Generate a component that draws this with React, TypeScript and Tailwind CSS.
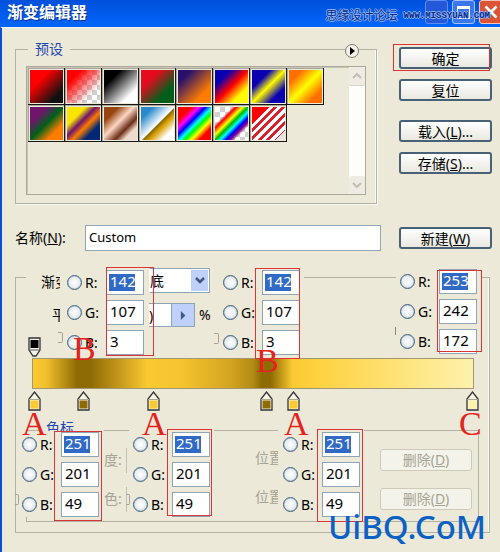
import type { ReactNode } from "react";

const presets = [
  "[background:linear-gradient(135deg,#ff0000_30%,#111_80%)]",
  "[background:linear-gradient(135deg,#ff0000_22%,#ff000000_75%),conic-gradient(#d0d0d0_25%,#fff_0_50%,#d0d0d0_0_75%,#fff_0)_0_0/10px_10px]",
  "[background:linear-gradient(135deg,#000_25%,#fff_78%)]",
  "[background:linear-gradient(135deg,#e60a1e_28%,#00601b_72%)]",
  "[background:linear-gradient(135deg,#29106b_20%,#ff7c00_75%)]",
  "[background:linear-gradient(135deg,#0a00b2_24%,#ff0000_50%,#fffc00_76%)]",
  "[background:linear-gradient(135deg,#0a00b2_28%,#fffc00_50%,#0a00b2_76%)]",
  "[background:linear-gradient(135deg,#ff6e00_20%,#ffff00_50%,#ff6e00_80%)]",
  "[background:linear-gradient(135deg,#6f156c_25%,#00601b_50%,#fd7c00_76%)]",
  "[background:linear-gradient(135deg,#f9e600_28%,#6f156c_44%,#fd7c00_58%,#002874_76%)]",
  "[background:linear-gradient(135deg,#974612_22%,#fbd8c5_45%,#6c2e16_66%,#efdbcd_80%)]",
  "[background:linear-gradient(135deg,#2989cc_18%,#fff_50%,#906a00_53%,#d99f00_62%,#fff_82%)]",
  "[background:linear-gradient(135deg,#f00_20%,#f0f_32%,#00f_42%,#0ff_52%,#0f0_60%,#ff0_70%,#f00_82%)]",
  "[background:linear-gradient(135deg,#f000_26%,#f00_32%,#ff0_42%,#0b0_50%,#0ff_58%,#00f_66%,#808_73%,#f0f0_80%),conic-gradient(#d0d0d0_25%,#fff_0_50%,#d0d0d0_0_75%,#fff_0)_0_0/10px_10px]",
  "[background:linear-gradient(135deg,#f00_27%,#f000_27%),linear-gradient(315deg,#e8e4e0_14%,#fff0_14%),repeating-linear-gradient(135deg,#fff_0_3px,#d8202c_3px_6px)]",
];

const numberBox =
  "h-[25px] w-[38px] border border-[#8fa5b5] pb-[3px] pl-[3px] text-[15px] leading-5 outline-none font-['Noto_Sans',sans-serif]";

function PushButton({ children, disabled = false }: { children: ReactNode; disabled?: boolean }) {
  return (
    <button
      disabled={disabled}
      className={
        disabled
          ? "h-[22px] w-[92px] rounded-[3px] border border-[#cdcabb] bg-[#f4f3ea] text-sm leading-5 text-[#a5a395]"
          : "h-[22px] w-[93px] rounded-[3px] border-2 border-[#486177] bg-linear-to-b from-white to-[#e9e8e0] text-sm leading-[17px] text-black"
      }
    >
      {children}
    </button>
  );
}

function Stop({ color, place, flip = false }: { color: string; place: string; flip?: boolean }) {
  return (
    <svg viewBox="0 0 13 20" className={`absolute top-0 h-5 w-[13px] ${place}`}>
      {flip ? (
        <>
          <path d="M1 1h11v12l-4 6H5l-4-6z" fill="#f4f2e6" stroke="#333" strokeWidth="1.3" />
          <path d="M1 13h11" stroke="#555" />
          <path d="M2.500 3h8v8h-8z" fill={color} />
        </>
      ) : (
        <>
          <path d="M1 19V8l5.500-7L12 8v11z" fill="#f7f4e4" stroke="#333" strokeWidth="1.3" />
          <path d="M1 8.500h11" stroke="#aaa794" />
          <path d="M2.500 9.500h8v8h-8z" fill={color} />
        </>
      )}
    </svg>
  );
}

type ChannelProps = { id: string; values: [number, number, number]; place: string; frame: string };

function Channels({ id, values, place, frame }: ChannelProps) {
  return (
    <>
      <div role="group" aria-label={`RGB ${id}`} className={`absolute flex flex-col gap-[5px] bg-[#ece9d8] ${place}`}>
        {["R", "G", "B"].map((name, i) => (
          <div key={name} className="flex items-center">
            <input
              type="radio"
              name={id}
              aria-label={`${name} ${id}`}
              className="size-[15px] shrink-0 appearance-none rounded-full border border-[#3f6280] bg-radial from-white to-[#d8e0e4] shadow-[inset_0_0_1px_#53718a]"
            />
            <label htmlFor={`${id}-${name}`} className="w-6 pl-[3px] font-['Noto_Sans',sans-serif] text-sm leading-5">
              {name}:
            </label>
            <input
              id={`${id}-${name}`}
              defaultValue={values[i]}
              className={`${numberBox} ${
                i === 0
                  ? "bg-white bg-[linear-gradient(#316ac5,#316ac5)] bg-[length:26px_17px] bg-[position:2px_3px] bg-no-repeat text-white"
                  : "bg-white text-black"
              }`}
            />
          </div>
        ))}
      </div>
      <div className={`pointer-events-none absolute border border-[#dc3434] ${frame}`} />
    </>
  );
}

function Mark({ children, place }: { children: string; place: string }) {
  return (
    <span className={`absolute font-['Liberation_Serif',serif] text-[34px] leading-8 text-[#e3241c] ${place}`}>
      {children}
    </span>
  );
}

export default function App() {
  return (
    <div className="relative min-h-screen overflow-hidden bg-[#ece9d8] font-['Noto_Sans','Noto_Sans_CJK_SC',sans-serif] text-sm text-black">
      <header className="flex h-[27px] items-start justify-between bg-linear-to-b from-[#0050dc] to-[#0266fb] pl-[7px]">
        <h1 className="text-base leading-6 font-bold text-white [text-shadow:1px_1px_#0a2f8c]">渐变编辑器</h1>
        <div className="-mr-[2px] flex gap-1">
          <button aria-label="最小化" className="h-6 w-[23px] rounded-[3px] border border-[#5d8df0] bg-[#2458d8]" />
          <button aria-label="最大化" className="flex h-6 w-[23px] items-center justify-center rounded-[3px] border border-[#a9c4fa] bg-[#3a76ee]">
            <span className="h-[13px] w-[13px] border border-t-[3px] border-white" />
          </button>
          <button aria-label="关闭" className="flex h-6 w-[23px] items-center justify-center rounded-[3px] border border-[#f3c3b5] bg-[#dc5336]">
            <svg viewBox="0 0 14 14" className="size-[14px]">
              <path d="M1.500 1.500l11 11M12.500 1.500l-11 11" stroke="#fff" strokeWidth="2.500" />
            </svg>
          </button>
        </div>
      </header>

      <main className="min-h-[525px] border-t border-l-2 border-t-[#f6f4ea] border-l-[#0b50d4] pl-[13px]">
        <div className="flex pt-[11px] pr-2">
          <fieldset className="flex-1 border border-[#b3b1a2] px-[10px] pt-[7px] pb-2 shadow-[inset_-1px_0_#faf9f2,1px_1px_#faf9f2]">
            <legend className="ml-[2px] h-5 px-[7px] text-[14px] leading-5 text-[#1c48b0]">预设</legend>
            <div className="flex h-[129px] justify-between border border-[#aaa89a] shadow-[inset_1px_1px_#c9c6b6]">
              <div className="grid grid-cols-8 content-start pt-px pl-px">
                {presets.map((swatch, i) => (
                  <button
                    key={i}
                    aria-label={`预设 ${i + 1}`}
                    className="size-[37px] border-r border-b border-[#161616] bg-[#a9a799] pt-px pl-px"
                  >
                    <span className={`block size-[35px] border border-[#eeeada] bg-clip-padding! ${swatch}`} />
                  </button>
                ))}
              </div>
              <div className="flex w-4 flex-col justify-between bg-[#fdfdfa]">
                <span className="flex h-[18px] items-center justify-center rounded-xs bg-[#eeece2] shadow-[0_1px_#d8d5c8]">
                  <svg viewBox="0 0 10 6" className="w-[10px]"><path d="M1 5l4-4 4 4" fill="none" stroke="#c2bfb1" strokeWidth="2" /></svg>
                </span>
                <span className="flex h-[18px] items-center justify-center rounded-xs bg-[#eeece2]">
                  <svg viewBox="0 0 10 6" className="w-[10px]"><path d="M1 1l4 4 4-4" fill="none" stroke="#c2bfb1" strokeWidth="2" /></svg>
                </span>
              </div>
            </div>
          </fieldset>
          <div className="ml-[22px] flex flex-col gap-[10px] pt-2">
            <PushButton>确定</PushButton>
            <PushButton>复位</PushButton>
            <div className="mt-[9px] flex flex-col gap-[10px]">
              <PushButton>载入(<u>L</u>)...</PushButton>
              <PushButton>存储(<u>S</u>)...</PushButton>
            </div>
          </div>
        </div>

        <div className="mt-[21px] flex h-[26px] items-center pr-2">
          <label htmlFor="name" className="w-[70px] text-sm">名称(<u>N</u>):</label>
          <input
            id="name"
            defaultValue="Custom"
            className="mr-[18px] h-[26px] min-w-0 flex-1 border border-[#8fa5b5] bg-white pb-[2px] pl-[3px] text-[13px] outline-none"
          />
          <PushButton>新建(<u>W</u>)</PushButton>
        </div>

        <fieldset className="mt-[17px] mr-[10px] border border-[#b3b1a2] px-[10px] pb-[10px] shadow-[inset_-1px_0_#faf9f2]">
          <legend className="flex h-[19px] w-[278px] pl-[15px]">
            <label htmlFor="kind" className="w-[108px] leading-7">渐变</label>
            <span className="relative block h-[25px] w-[61px]">
              <select id="kind" className="h-[25px] w-[61px] appearance-none border border-[#8fa5b5] border-l-transparent bg-white text-sm leading-5">
                <option>底</option>
              </select>
              <span className="pointer-events-none absolute top-[2px] right-[2px] flex h-[21px] w-[17px] items-center justify-center bg-[#bfd0fa]">
                <svg viewBox="0 0 10 7" className="w-[10px]"><path d="M1 1l4 4 4-4" fill="none" stroke="#40577f" strokeWidth="2.500" /></svg>
              </span>
            </span>
          </legend>
          <div className="mt-4 flex h-6 items-center pl-[26px]">
            <label htmlFor="smooth" className="w-[97px]">平</label>
            <input id="smooth" defaultValue=")" className="h-6 w-[22px] border-y border-[#8fa5b5] bg-white text-sm outline-none" />
            <button aria-label="平滑度" className="flex h-6 w-6 items-center justify-center border border-[#8fa5b5] bg-[#bfd0fa]">
              <svg viewBox="0 0 6 10" className="h-[9px]"><path d="M1 0l5 5-5 5z" fill="#40577f" /></svg>
            </button>
            <span className="pl-1">%</span>
          </div>
          <div className="relative mt-[10px] h-5">
            <Stop flip color="#000" place="left-[2px]" />
          </div>
          <div className="mt-px mr-[5px] ml-[6px] h-[31px] border border-[#a29770] bg-[linear-gradient(90deg,#fbc931_0%,#f3c02d_3%,#8e6b03_10%,#8e6b03_13%,#c0941a_19%,#fbc931_26%,#f5c32e_34%,#d3a420_45%,#b28a15_50%,#8e6b03_52%,#8e6b03_54%,#fbc931_59%,#ffd240_65%,#fdf2ac_100%)]" />
          <div className="relative mt-[2px] h-5">
            <Stop color="#fbc931" place="left-[2px]" />
            <Stop color="#8e6b03" place="left-[51px]" />
            <Stop color="#fbc931" place="left-[121px]" />
            <Stop color="#8e6b03" place="left-[234px]" />
            <Stop color="#fbc931" place="left-[261px]" />
            <Stop color="#fdf2ac" place="right-0" />
          </div>
          <fieldset className="mt-[9px] border border-[#b3b1a2] pt-[9px] pb-[11px]">
            <legend className="ml-[15px] h-5 w-[62px] pl-1 leading-4 text-[#1c48b0]">色标</legend>
            <div className="flex flex-col gap-[17px] pr-[6px] pl-[77px] text-[#a5a395]">
              {["度:", "色:"].map((text) => (
                <div key={text} className="flex h-[22px] items-center">
                  <span className="w-[22px]">{text}</span>
                  <span className="h-[25px] flex-1 border-l border-[#c3c0b0] pl-32">位置</span>
                  <PushButton disabled>删除(<u>D</u>)</PushButton>
                </div>
              ))}
            </div>
          </fieldset>
        </fieldset>
      </main>

      <button aria-label="预设菜单" className="absolute top-[44px] left-[345px] flex size-[14px] items-center justify-center rounded-full border border-[#777] bg-[#f4f2e8]">
        <svg viewBox="0 0 5 8" className="h-2"><path d="M0 0l5 4-5 4z" /></svg>
      </button>

      <Channels id="b1" values={[142, 107, 3]} place="left-[60px] top-[268px] w-[88px] pl-[7px] pt-[2px]" frame="left-[106px] top-[267px] h-[89px] w-[48px]" />
      <Channels id="b2" values={[142, 107, 3]} place="left-[219px] top-[268px] w-[85px] pl-1 pt-[2px]" frame="left-[255px] top-[268px] h-[91px] w-[45px]" />
      <Channels id="c" values={[253, 242, 172]} place="left-[396px] top-[268px] w-[86px] pl-1 pt-px" frame="left-[437px] top-[270px] h-[82px] w-[45px]" />
      <Channels id="a1" values={[251, 201, 49]} place="left-[18px] top-[431px] w-[84px] pl-1 pt-px" frame="left-[54px] top-[431px] h-[90px] w-[48px]" />
      <Channels id="a2" values={[251, 201, 49]} place="left-[129px] top-[427px] w-[85px] pl-1 pt-[5px]" frame="left-[167px] top-[429px] h-[87px] w-[45px]" />
      <Channels id="a3" values={[251, 201, 49]} place="left-[278px] top-[427px] w-[86px] pl-[5px] pt-[5px]" frame="left-[317px] top-[429px] h-[93px] w-[46px]" />

      <span className="absolute top-[332px] left-[58px] h-[11px] w-[5px] rounded-r-xs border border-l-0 border-[#a5a395]" />
      <span className="absolute top-[333px] left-[214px] h-[11px] w-[5px] rounded-r-xs border border-l-0 border-[#a5a395]" />
      <span className="absolute top-[327px] left-[395px] h-2 w-px bg-[#8a8878]" />
      <span className="absolute top-[494px] left-[15px] h-[11px] w-1 rounded-r-xs border border-l-0 border-[#a5a395]" />
      <span className="absolute top-[494px] left-[126px] h-[11px] w-1 rounded-r-xs border border-l-0 border-[#a5a395]" />

      <div className="pointer-events-none absolute top-[44px] left-[393px] h-[27px] w-[97px] border border-[#dc3434]" />
      <Mark place="left-[73px] top-[333px]">B</Mark>
      <Mark place="left-[256px] top-[345px]">B</Mark>
      <Mark place="left-[22px] top-[408px]">A</Mark>
      <Mark place="left-[142px] top-[408px]">A</Mark>
      <Mark place="left-[284px] top-[408px]">A</Mark>
      <Mark place="left-[459px] top-[408px]">C</Mark>

      <p className="absolute top-[8px] right-[10px] flex items-center gap-[6px] leading-4 whitespace-nowrap text-[#0a2a86] [text-shadow:1px_0_#8db4fb,-1px_0_#8db4fb,0_1px_#8db4fb,0_-1px_#8db4fb]">
        <span className="text-xs">思缘设计论坛</span>
        <span className="font-['Liberation_Mono',monospace] text-[9px] font-bold">WWW.MISSYUAN.COM</span>
      </p>
      <p className="absolute top-[507px] left-[328px] text-[33px] leading-10 font-medium text-[#0b62c4]">UiBQ.CoM</p>
    </div>
  );
}
